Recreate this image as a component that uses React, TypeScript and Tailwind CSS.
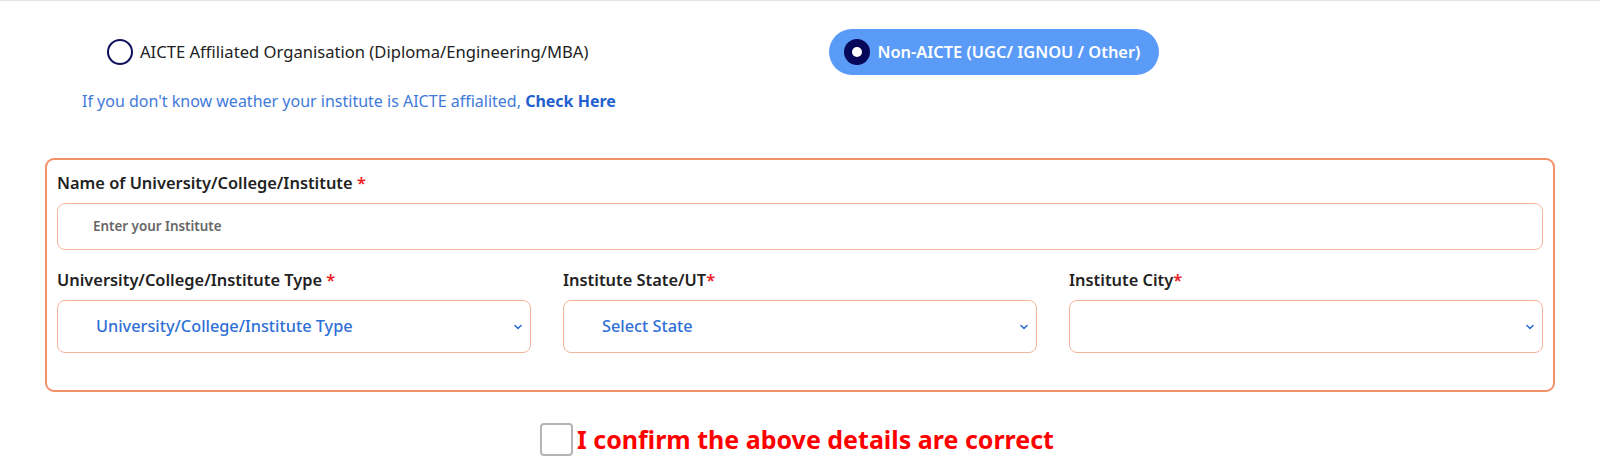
import React from "react";

const font = { fontFamily: '"Noto Sans", "Open Sans", Arial, sans-serif' };

function Chevron() {
  return (
    <svg width="10" height="10" viewBox="0 0 10 10" className="shrink-0">
      <path d="M2 3.5 L5 6.5 L8 3.5" fill="none" stroke="#2f6fd6" strokeWidth="1.6" strokeLinecap="round" strokeLinejoin="round" />
    </svg>
  );
}

function SelectBox({ value }: { value: string }) {
  return (
    <div className="flex h-[53px] items-center justify-between rounded-[8px] border border-[#f5b49c] bg-white pl-[38px] pr-[7px]">
      <span className="text-[16.3px] font-medium text-[#2f6fd6]">{value}</span>
      <Chevron />
    </div>
  );
}

function Label({ text, gap = true }: { text: string; gap?: boolean }) {
  return (
    <div className="mb-[9px] text-[16.4px] font-semibold leading-[23px] text-[#222]">
      {text}
      {gap ? " " : ""}
      <span className="text-[#ee1c25]">*</span>
    </div>
  );
}

export default function App() {
  return (
    <div className="min-h-[470px] w-[1600px] border-t border-[#e2e2e2] bg-white" style={font}>
      {/* type selector */}
      <div className="flex items-center pt-[28px]">
        <label className="ml-[107px] flex items-center gap-[7px]">
          <span className="h-[26px] w-[26px] rounded-full border-2 border-[#10105a]" />
          <span className="text-[16.6px] text-[#222]">AICTE Affiliated Organisation (Diploma/Engineering/MBA)</span>
        </label>
        <label className="ml-[241px] flex h-[46px] w-[330px] items-center gap-[7px] rounded-full bg-[#5b9bf8] pl-[15px]">
          <span className="flex h-[26px] w-[26px] items-center justify-center rounded-full bg-[#08085a]">
            <span className="h-[10px] w-[10px] rounded-full bg-white" />
          </span>
          <span className="text-[16.4px] font-semibold text-white">Non-AICTE (UGC/ IGNOU / Other)</span>
        </label>
      </div>
      <p className="ml-[82px] mt-[15px] text-[16px] leading-[23px] text-[#3f7ad9]">
        If you don't know weather your institute is AICTE affialited,{" "}
        <span className="font-bold text-[#1f5fcf]">Check Here</span>
      </p>

      {/* institute details */}
      <div className="mx-[45px] mt-[45px] rounded-[9px] border-2 border-[#f5916a] px-[10px] pb-[37px] pt-[11px]">
        <Label text="Name of University/College/Institute" />
        <div className="flex h-[47px] items-center rounded-[8px] border border-[#f5b49c] pl-[35px]">
          <span className="text-[13.4px] font-semibold text-[#666]">Enter your Institute</span>
        </div>
        <div className="mt-[18px] grid grid-cols-3 gap-[32px]">
          <div>
            <Label text="University/College/Institute Type" />
            <SelectBox value="University/College/Institute Type" />
          </div>
          <div>
            <Label text="Institute State/UT" gap={false} />
            <SelectBox value="Select State" />
          </div>
          <div>
            <Label text="Institute City" gap={false} />
            <SelectBox value="" />
          </div>
        </div>
      </div>

      {/* confirmation */}
      <div className="mt-[30px] flex items-center justify-center gap-[4px] pr-[6px]">
        <span className="h-[33px] w-[33px] rounded-[4px] border-2 border-[#b5b5b5] bg-white" />
        <span className="text-[25px] font-bold leading-[34px] text-[#ff0000]">I confirm the above details are correct</span>
      </div>
    </div>
  );
}
